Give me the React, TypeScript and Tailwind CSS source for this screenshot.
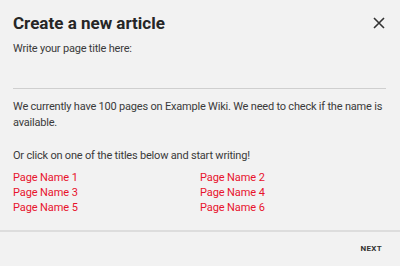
const pages = ["Page Name 1", "Page Name 2", "Page Name 3", "Page Name 4", "Page Name 5", "Page Name 6"];

export default function App() {
  return (
    <div
      className="flex h-[266px] w-[400px] flex-col bg-[#f2f2f2] text-[#3a3a3a]"
      style={{ fontFamily: "Roboto, 'Noto Sans', sans-serif" }}
    >
      <div className="flex-1 px-[13px]">
        <div className="flex items-center justify-between pt-[11px]">
          <h1 className="text-[17px] font-bold leading-[24px] text-[#262626]">Create a new article</h1>
          <button type="button" className="mr-[1px] text-[#333]">
            <svg width="14" height="14" viewBox="0 0 14 14" fill="none" stroke="currentColor" strokeWidth="1.6">
              <path d="M2 2 L12 12 M12 2 L2 12" />
            </svg>
          </button>
        </div>
        <p className="mt-[6px] text-[11px] leading-[16px] tracking-[-0.2px]">Write your page title here:</p>
        <input
          className="mt-[7px] block h-[25px] w-[373px] border-b border-[#cfcfcf] bg-transparent text-[11px] outline-none"
          aria-label="Page title"
        />
        <p className="mt-[10px] text-[11px] leading-[16px] tracking-[-0.2px]">
          We currently have 100 pages on Example Wiki. We need to check if the name is available.
        </p>
        <p className="mt-[17px] text-[11px] leading-[16px] tracking-[-0.2px]">
          Or click on one of the titles below and start writing!
        </p>
        <div className="mt-[6px] grid grid-cols-[187px_1fr]">
          {pages.map((p) => (
            <a key={p} href="#" className="text-[11px] leading-[15px] tracking-[-0.1px] text-[#e8132c]">
              {p}
            </a>
          ))}
        </div>
      </div>
      <div className="flex h-[36px] items-center justify-end border-t-2 border-[#dddddd] pr-[18px]">
        <button type="button" className="text-[8px] font-bold tracking-[0.3px] text-[#333]">
          NEXT
        </button>
      </div>
    </div>
  );
}
